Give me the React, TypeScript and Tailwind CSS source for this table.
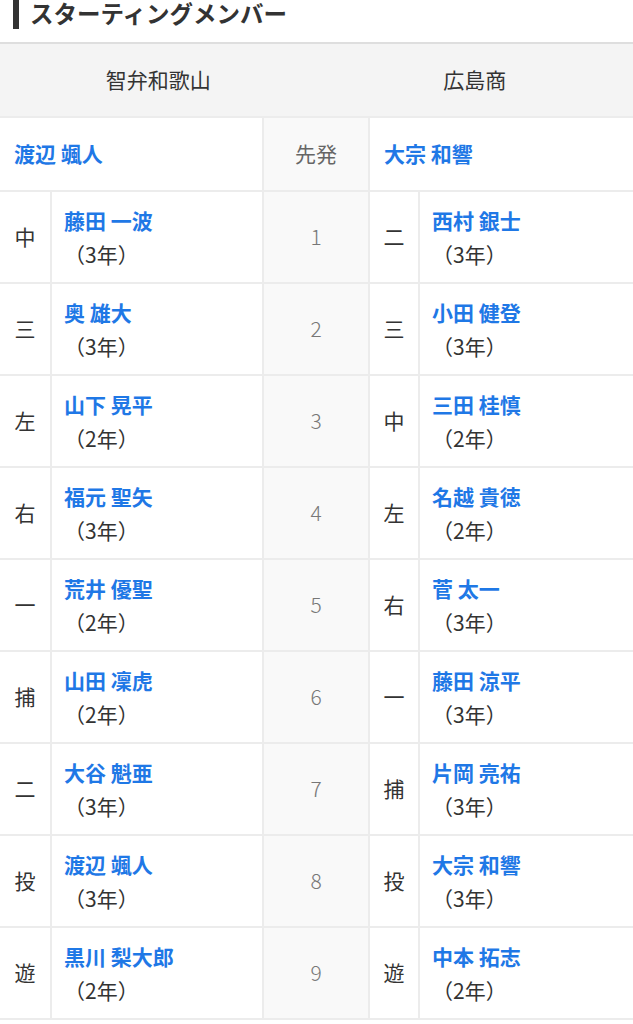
import React from "react";

type Player = { pos: string; name: string; grade: number };

const home: Player[] = [
    { pos: "中", name: "藤田 一波", grade: 3 },
    { pos: "三", name: "奥 雄大", grade: 3 },
    { pos: "左", name: "山下 晃平", grade: 2 },
    { pos: "右", name: "福元 聖矢", grade: 3 },
    { pos: "一", name: "荒井 優聖", grade: 2 },
    { pos: "捕", name: "山田 凜虎", grade: 2 },
    { pos: "二", name: "大谷 魁亜", grade: 3 },
    { pos: "投", name: "渡辺 颯人", grade: 3 },
    { pos: "遊", name: "黒川 梨大郎", grade: 2 },
];

const away: Player[] = [
    { pos: "二", name: "西村 銀士", grade: 3 },
    { pos: "三", name: "小田 健登", grade: 3 },
    { pos: "中", name: "三田 桂慎", grade: 2 },
    { pos: "左", name: "名越 貴徳", grade: 2 },
    { pos: "右", name: "菅 太一", grade: 3 },
    { pos: "一", name: "藤田 涼平", grade: 3 },
    { pos: "捕", name: "片岡 亮祐", grade: 3 },
    { pos: "投", name: "大宗 和響", grade: 3 },
    { pos: "遊", name: "中本 拓志", grade: 2 },
];

const font = { fontFamily: '"Noto Sans CJK JP", "Noto Sans", sans-serif' };

const NameCell = ({ p }: { p: Player }) => (
    <div className="bg-white pl-3 flex flex-col justify-center text-[21px] leading-[34px]">
        <span className="font-bold text-[#1f78e6] whitespace-pre">{p.name}</span>
        <span className="text-[#333]">（{p.grade}年）</span>
    </div>
);

export default function App() {
    return (
        <div className="w-[633px] bg-white text-[#333]" style={font}>
            <div className="flex items-start h-[29px]">
                <div className="ml-[13px] w-[6px] h-[29px] bg-[#333]" />
                <h2 className="ml-[11px] text-[23.5px] font-bold leading-[26px] text-[#333]">スターティングメンバー</h2>
            </div>

            <div className="mt-[13px] border-t-2 border-[#dedede]">
                <div className="flex h-[72px] bg-[#f4f4f4] text-[21px]">
                    <div className="w-1/2 flex items-center justify-center">智弁和歌山</div>
                    <div className="w-1/2 flex items-center justify-center">広島商</div>
                </div>

                <div className="grid grid-cols-[50px_210px_104px_48px_1fr] gap-[2px] bg-[#ececec] py-[2px] text-[21px]">
                    <div className="col-span-2 bg-white h-[72px] flex items-center pl-[14px] font-bold text-[#1f78e6]">渡辺 颯人</div>
                    <div className="bg-[#f9f9f9] flex items-center justify-center text-[#666]">先発</div>
                    <div className="col-span-2 bg-white flex items-center pl-[14px] font-bold text-[#1f78e6]">大宗 和響</div>

                    {home.map((h, i) => (
                        <React.Fragment key={i}>
                            <div className="bg-white h-[90px] flex items-center justify-center">{h.pos}</div>
                            <NameCell p={h} />
                            <div className="bg-[#f9f9f9] flex items-center justify-center text-[#777] font-light">{i + 1}</div>
                            <div className="bg-white flex items-center justify-center">{away[i].pos}</div>
                            <NameCell p={away[i]} />
                        </React.Fragment>
                    ))}
                </div>
            </div>
        </div>
    );
}
